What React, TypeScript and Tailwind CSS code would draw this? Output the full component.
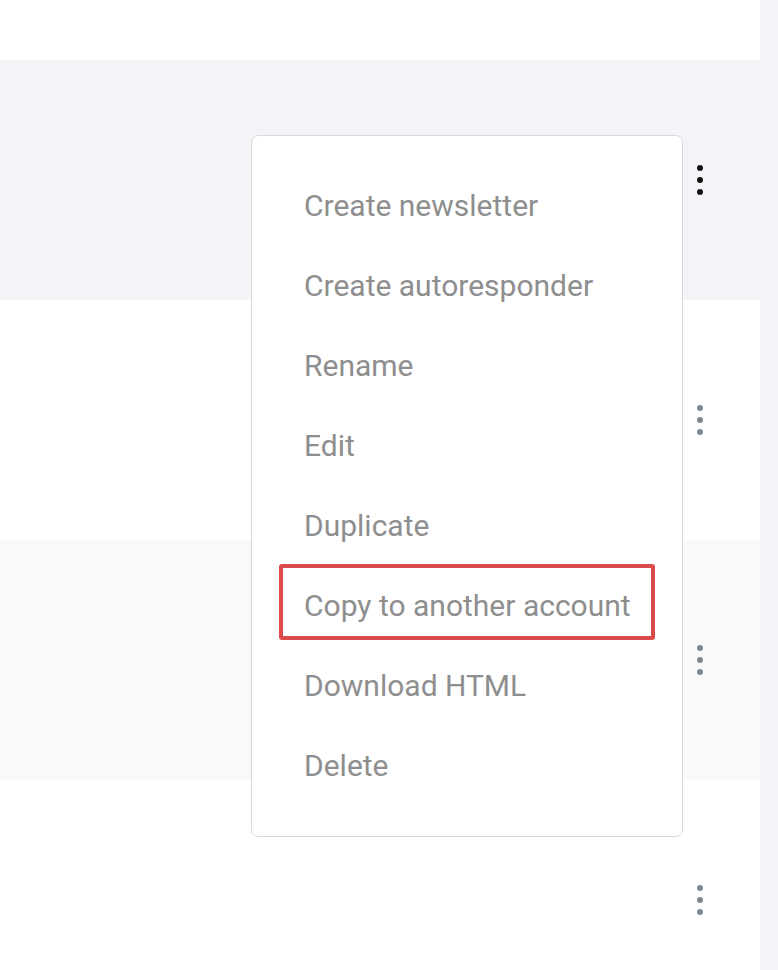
import React from "react";

const menuItems = [
  "Create newsletter",
  "Create autoresponder",
  "Rename",
  "Edit",
  "Duplicate",
  "Copy to another account",
  "Download HTML",
  "Delete",
];

const rows = [
  { bg: "bg-[#f3f4f7]", active: true },
  { bg: "bg-white", active: false },
  { bg: "bg-[#f8f9fb]", active: false },
  { bg: "bg-white", active: false },
];

function Dots({ active }: { active: boolean }) {
  const dot = active ? "bg-[#111111]" : "bg-[#7d8890]";
  return (
    <div className="flex flex-col gap-[6px]">
      <span className={`block w-[6px] h-[6px] rounded-full ${dot}`} />
      <span className={`block w-[6px] h-[6px] rounded-full ${dot}`} />
      <span className={`block w-[6px] h-[6px] rounded-full ${dot}`} />
    </div>
  );
}

export default function App() {
  return (
    <div
      className="relative w-[778px] h-[970px] overflow-hidden bg-[#f3f4f7] flex"
      style={{ fontFamily: "Roboto, 'Noto Sans', sans-serif" }}
    >
      <div className="w-[760px] flex flex-col shrink-0">
        <div className="h-[60px] shrink-0 bg-white" />
        {rows.map((row, i) => (
          <div
            key={i}
            className={`h-[240px] shrink-0 flex items-center justify-end pr-[57px] ${row.bg}`}
          >
            <Dots active={row.active} />
          </div>
        ))}
      </div>

      <div className="absolute left-[251px] top-[135px] w-[432px] h-[702px] bg-white border-[1.5px] border-[#dadada] rounded-[7px] pt-[29px] pb-[31px]">
        <ul className="flex flex-col">
          {menuItems.map((item) => (
            <li
              key={item}
              className="relative h-[80px] flex items-center pl-[52px] text-[30px] text-[#8e8e8e]"
            >
              {item}
              {item === "Copy to another account" && (
                <span className="absolute left-[27px] right-[27px] top-[-1px] bottom-[5px] border-4 border-[#dc4a4c] rounded-[3px]" />
              )}
            </li>
          ))}
        </ul>
      </div>
    </div>
  );
}
